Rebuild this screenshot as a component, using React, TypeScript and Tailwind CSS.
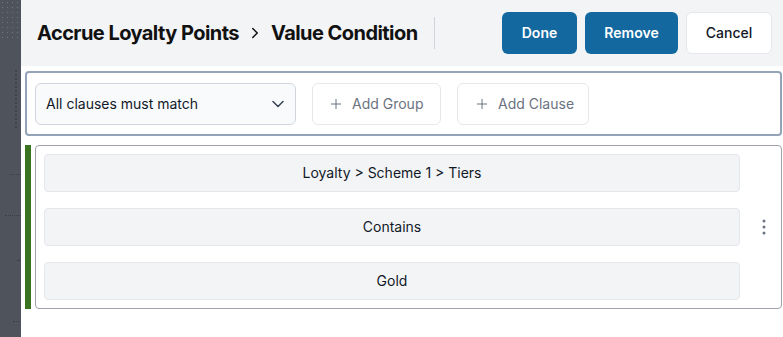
import { ChevronDown, ChevronRight, Plus } from 'lucide-react'

const clauseParts = ['Loyalty > Scheme 1 > Tiers', 'Contains', 'Gold']

function Kebab() {
  return (
    <svg width="4" height="16" viewBox="0 0 4 16" fill="#6b7280">
      <circle cx="2" cy="2" r="1.5" />
      <circle cx="2" cy="8" r="1.5" />
      <circle cx="2" cy="14" r="1.5" />
    </svg>
  )
}

function Backdrop() {
  // dimmed page peeking out on the left of the drawer
  return (
    <div className="relative w-[21px] shrink-0 bg-[#4e535c] overflow-hidden">
      <div className="absolute left-0 top-0 w-[18px] h-[42px] bg-[radial-gradient(circle,#7d828c_0.6px,transparent_0.8px)] bg-[length:5px_5px] opacity-70" />
      <div className="absolute left-[15px] top-[70px] h-[58px] border-l-2 border-dotted border-[#3f434b]" />
      <div className="absolute left-[10px] top-[174px] w-[11px] border-t border-dotted border-[#3a3e45]" />
      <div className="absolute left-[5px] top-[215px] w-[16px] border-t border-dotted border-[#3a3e45]" />
      <div className="absolute left-[17px] top-[260px] w-[2px] border-t border-dotted border-[#3a3e45]" />
      <div className="absolute left-[13px] top-[321px] w-[6px] border-t border-dotted border-[#3a3e45]" />
    </div>
  )
}

export default function App() {
  return (
    <div className="flex w-[783px] h-[337px] bg-white font-['Inter',sans-serif] text-[#111827]">
      <Backdrop />
      <div className="flex-1 flex flex-col min-w-0">
        <header className="h-[66px] shrink-0 bg-[#f3f4f6] flex items-center pl-4 pr-[11px]">
          <h1 className="flex items-center text-[20px] font-bold tracking-[-0.55px] text-[#111111]">
            Accrue Loyalty Points
            <ChevronRight size={18} strokeWidth={2} className="mx-[7px] text-[#111111]" />
            Value Condition
          </h1>
          <div className="ml-4 w-px h-[32px] bg-[#d1d5db]" />
          <div className="ml-auto flex items-center gap-2">
            <button className="h-[42px] w-[75px] rounded-md bg-[#12689f] text-white text-sm font-semibold">Done</button>
            <button className="h-[42px] w-[93px] rounded-md bg-[#12689f] text-white text-sm font-semibold">Remove</button>
            <button className="h-[42px] w-[86px] rounded-md bg-white border border-[#e5e7eb] text-sm font-medium text-[#111827]">Cancel</button>
          </div>
        </header>

        <div className="pl-1 pr-[1px] pt-[5px]">
          <div className="h-[65px] border-2 border-[#94a3b8] rounded flex items-center gap-4 px-2">
            <div className="w-[261px] h-[42px] flex items-center justify-between pl-[10px] pr-[7px] bg-[#f9fafb] border border-[#d1d5db] rounded-md text-sm">
              All clauses must match
              <ChevronDown size={20} strokeWidth={1.8} className="text-[#374151]" />
            </div>
            <button className="h-[42px] w-[129px] flex items-center gap-2 pl-[15px] bg-white border border-[#e5e7eb] rounded-md text-sm text-[#6b7280]">
              <Plus size={16} strokeWidth={1.5} />
              Add Group
            </button>
            <button className="h-[42px] w-[132px] flex items-center gap-2 pl-[16px] bg-white border border-[#e5e7eb] rounded-md text-sm text-[#6b7280]">
              <Plus size={16} strokeWidth={1.5} />
              Add Clause
            </button>
          </div>

          <div className="mt-[9px] flex gap-1">
            <div className="w-[6px] bg-[#3b7421]" />
            <div className="flex-1 flex border border-[#a1a1aa] rounded p-2 pr-0">
              <div className="w-[696px] flex flex-col gap-4">
                {clauseParts.map((part) => (
                  <div
                    key={part}
                    className="h-[38px] flex items-center justify-center bg-[#f3f4f6] border border-[#e5e7eb] rounded text-sm"
                  >
                    {part}
                  </div>
                ))}
              </div>
              <div className="flex-1 flex items-center justify-center pl-[6px]">
                <Kebab />
              </div>
            </div>
          </div>
        </div>
      </div>
    </div>
  )
}
